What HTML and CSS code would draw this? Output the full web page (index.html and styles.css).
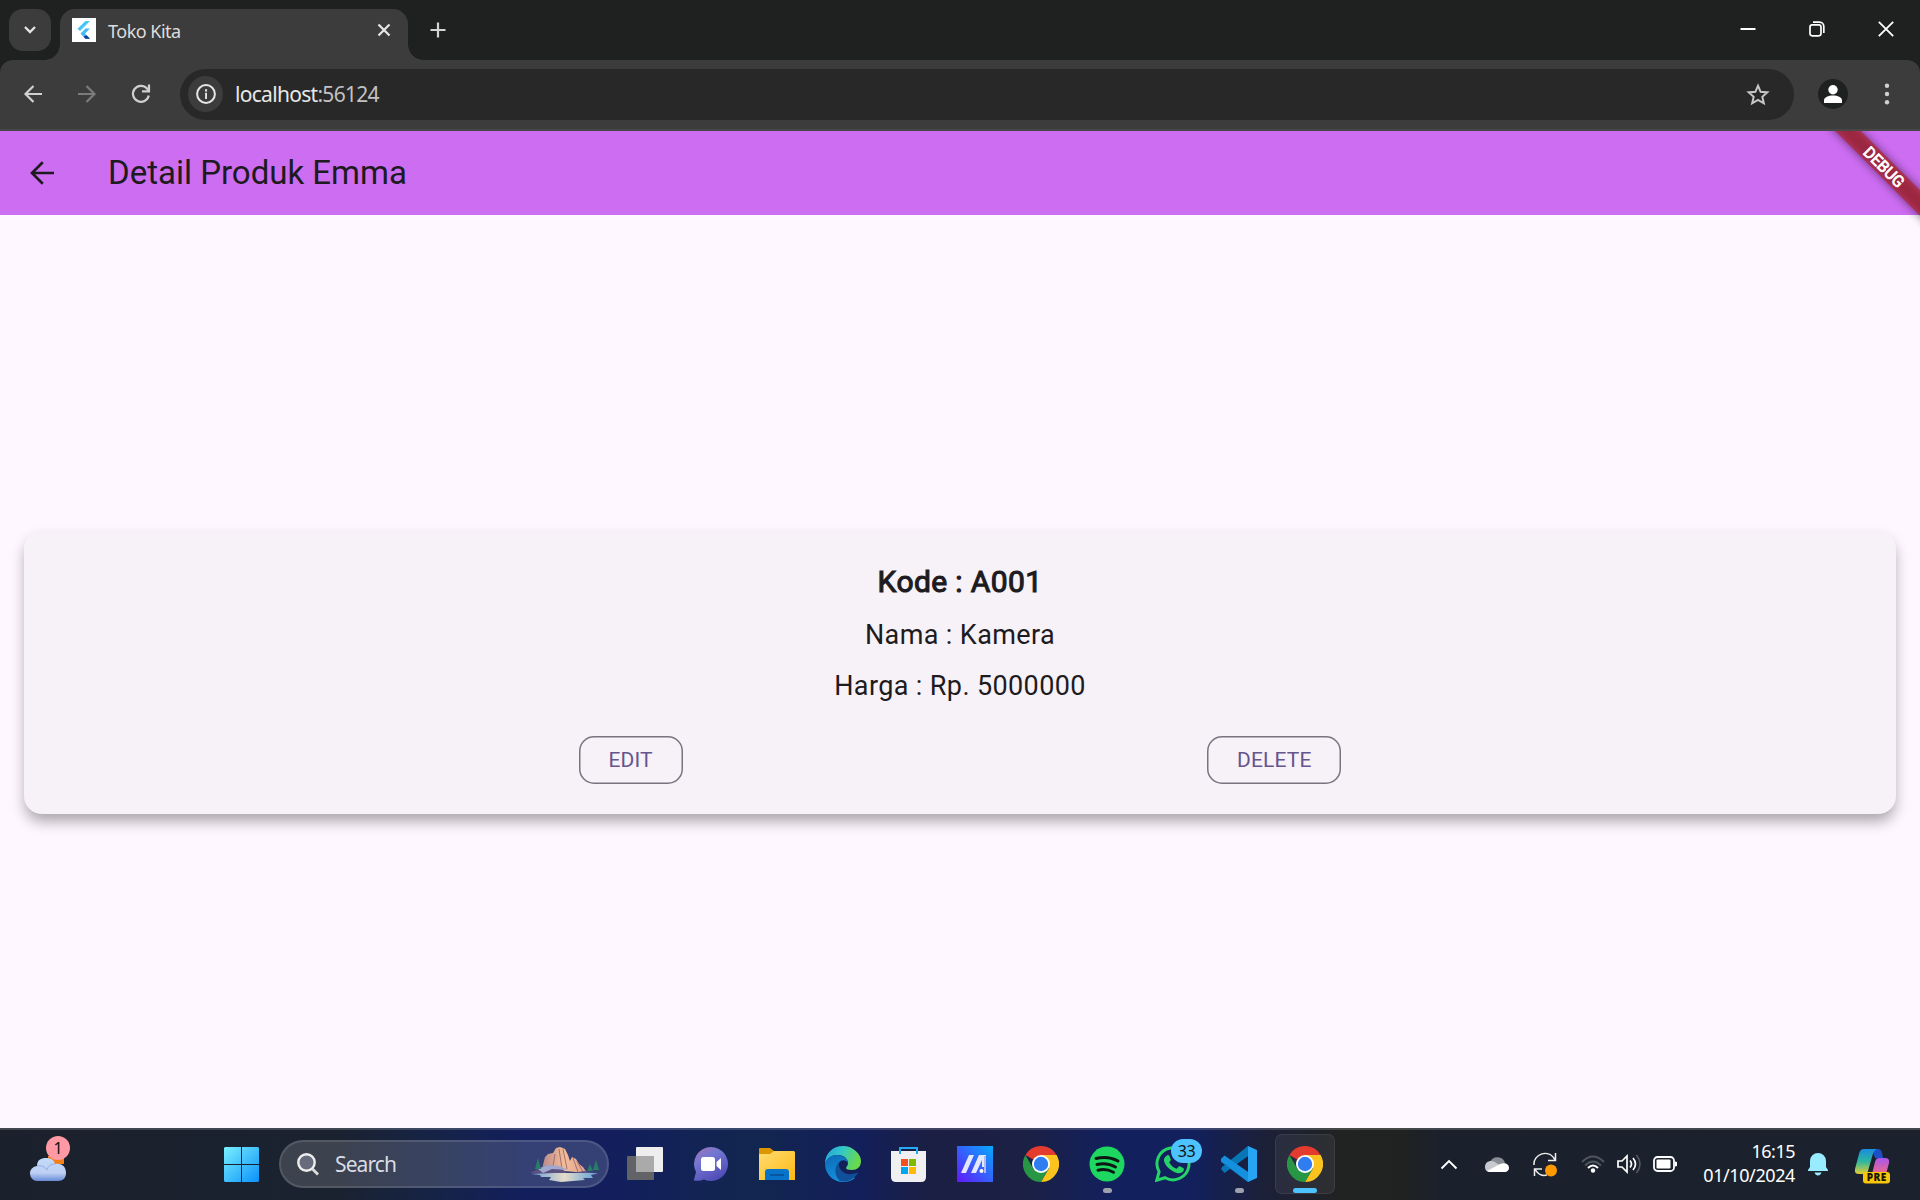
FILE: index.html
```html
<!DOCTYPE html>
<html lang="id">
<head>
<meta charset="utf-8">
<title>Toko Kita</title>
<link rel="stylesheet" href="styles.css">
</head>
<body>
<svg class="defs" width="0" height="0" aria-hidden="true">
  <defs>
    <symbol id="chrome" viewBox="0 0 36 36">
      <path d="M18 18 2.400 9A18 18 0 0 1 33.600 9Z" fill="#e33b2e"/>
      <path d="M18 9H33.600A18 18 0 0 1 18 36L25.800 22.500Z" fill="#fcc31e"/>
      <path d="M10.200 22.500 2.400 9A18 18 0 0 0 18 36L25.800 22.500Z" fill="#279746"/>
      <circle cx="18" cy="18" r="9" fill="#fff"/>
      <circle cx="18" cy="18" r="7.200" fill="#2f7df0"/>
    </symbol>
  </defs>
</svg>

<header class="tabstrip">
  <button class="tab-search"><svg width="14" height="10" viewBox="0 0 14 10"><path d="M2 2l5 5 5-5" fill="none" stroke="#e3e3e3" stroke-width="2.400"/></svg></button>
  <div class="tab">
    <svg class="favicon" width="24" height="24" viewBox="0 0 24 24"><path fill="#fff" d="M0 0h24v24H0z"/><path d="M13.500 3H18L8 13l-2.500-2.300z" fill="#45c5f8"/><path d="M13.500 10.500H18l-5 5 5 5.300h-4.500L8.500 15.500z" fill="#45b8f5"/><path d="M13.500 20.800H18l-3.500-3.500-3 1.400z" fill="#0b3c91"/></svg>
    <span class="tab-title">Toko Kita</span>
    <svg width="14" height="14" viewBox="0 0 14 14"><path d="M1.500 1.500l11 11m0-11l-11 11" stroke="#e8e8e8" stroke-width="2.200"/></svg>
  </div>
  <svg class="newtab" width="16" height="16" viewBox="0 0 16 16"><path d="M8 .5v15M.5 8h15" stroke="#d4d4d4" stroke-width="2.200"/></svg>
  <div class="window-buttons">
    <svg width="16" height="16" viewBox="0 0 16 16"><path d="M.5 8h15" stroke="#fff" stroke-width="2"/></svg>
    <svg width="16" height="16" viewBox="0 0 16 16" fill="none" stroke="#fff" stroke-width="1.700"><rect x="1" y="3.800" width="11" height="11" rx="2.200"/><path d="M4 1.200h6.500A4.300 4.300 0 0 1 14.800 5.500V12"/></svg>
    <svg width="16" height="16" viewBox="0 0 16 16"><path d="M.8.8l14.400 14.400m0-14.400L.8 15.200" stroke="#fff" stroke-width="1.800"/></svg>
  </div>
</header>

<nav class="toolbar">
  <svg width="20" height="20" viewBox="0 0 20 20" fill="none" stroke="#d0d0d0" stroke-width="2.200"><path d="M19 10H3M10.500 2l-8 8 8 8"/></svg>
  <svg width="20" height="20" viewBox="0 0 20 20" fill="none" stroke="#7b7b7b" stroke-width="2.200"><path d="M1 10h16M9.500 2l8 8-8 8"/></svg>
  <svg width="20" height="20" viewBox="0 0 20 20" fill="none" stroke="#d0d0d0" stroke-width="2.200"><path d="M17.800 11.500A8 8 0 1 1 16 4.500l2 2.200M18 .5v6.800h-7"/></svg>
  <div class="omnibox">
    <span class="site-info"><svg width="20" height="20" viewBox="0 0 20 20"><circle cx="10" cy="10" r="8.900" fill="none" stroke="#e6e6e6" stroke-width="2"/><path d="M9.100 8.800h1.900V15H9.100zM9 5.200h2.100v2.200H9z" fill="#e6e6e6"/></svg></span>
    <span class="url">localhost<span class="port">:56124</span></span>
    <svg width="24" height="23" viewBox="0 0 24 23"><path d="M12 2.700l2.600 6.100 6.700.6-5 4.400 1.500 6.500L12 16.900l-5.800 3.400 1.500-6.500-5-4.400 6.700-.6z" fill="none" stroke="#c7c7c7" stroke-width="2"/></svg>
  </div>
  <svg class="avatar" width="30" height="30" viewBox="0 0 30 30"><circle cx="15" cy="15" r="15" fill="#1f2120"/><circle cx="15" cy="10.700" r="4.700" fill="#fff"/><path d="M6 24v-2.500c0-3.500 4.500-5 9-5s9 1.500 9 5V24z" fill="#fff"/></svg>
  <svg class="menu" width="6" height="22" viewBox="0 0 6 22" fill="#d0d0d0"><circle cx="3" cy="2.800" r="2.200"/><circle cx="3" cy="11" r="2.200"/><circle cx="3" cy="19.200" r="2.200"/></svg>
</nav>

<main class="app">
  <div class="appbar">
    <svg width="24" height="24" viewBox="0 0 24 24"><path d="M24 12H2.500M12.800 1.200L2 12l10.800 10.800" fill="none" stroke="#1d1b20" stroke-width="2.700"/></svg>
    <h1>Detail Produk Emma</h1>
  </div>
  <svg class="debug" width="110" height="110" viewBox="0 0 110 110">
    <defs><filter id="soft" x="-30%" y="-100%" width="160%" height="300%"><feGaussianBlur stdDeviation="5"/></filter></defs>
    <g transform="translate(74 36) rotate(45)">
      <rect x="-90" y="-9" width="180" height="18" fill="#000" opacity=".5" filter="url(#soft)"/>
      <rect x="-90" y="-9" width="180" height="18" fill="#b71c1c" opacity=".63"/>
      <text x="0" y="5.500" text-anchor="middle" class="debug-text">DEBUG</text>
    </g>
  </svg>
  <div class="content">
    <section class="card">
      <p class="code">Kode : A001</p>
      <p class="line">Nama : Kamera</p>
      <p class="line">Harga : Rp. 5000000</p>
      <div class="actions"><button class="edit">EDIT</button><button class="delete">DELETE</button></div>
    </section>
  </div>
</main>

<footer class="taskbar">
  <div class="weather">
    <svg width="36" height="26" viewBox="0 0 36 26"><defs><linearGradient id="cl" x2="0" y2="1"><stop stop-color="#c3dafa"/><stop offset=".65" stop-color="#bdd0f3"/><stop offset="1" stop-color="#688bd6"/></linearGradient></defs><path d="M18 0h16v8H18z" fill="#f4801c"/><path d="M8 25a7.500 7.500 0 0 1-1-15C7 4 11 2 16 2c5 0 8 2 9 6 6-1 11 2 11 9 0 5-3 8-8 8z" fill="url(#cl)"/><path d="M7 10c5-1 8 1 10 4 1-4 4-6 8-6" stroke="#91afe4" fill="none"/></svg>
    <span class="badge red">1</span>
  </div>
  <div class="start"><svg width="35" height="35" viewBox="0 0 35 35"><defs><linearGradient id="win" x2="1" y2="1"><stop stop-color="#79f0ff"/><stop offset="1" stop-color="#0a91f8"/></linearGradient></defs><path fill="url(#win)" d="M1 0h16v17H0V1zM18 0h16l1 1v16H18zM0 18h17v17H1l-1-1zM18 18h17v16l-1 1H18z"/></svg></div>
  <div class="search">
    <svg width="22" height="23" viewBox="0 0 22 23"><circle cx="9.500" cy="9.500" r="8.200" fill="#666c7b" stroke="#eee" stroke-width="2.400"/><path d="M15.500 16l5.500 5.500" stroke="#ddd" stroke-width="2.800"/></svg>
    <span class="search-label">Search</span>
    <svg width="72" height="36" viewBox="0 0 72 36">
      <defs><linearGradient id="rock" x2="1"><stop stop-color="#b98a8a"/><stop offset=".5" stop-color="#f4bd98"/><stop offset="1" stop-color="#dba08c"/></linearGradient><linearGradient id="lake" x2="1"><stop stop-color="#6aa0d6"/><stop offset=".5" stop-color="#e4dccb"/><stop offset="1" stop-color="#5b9fd9"/></linearGradient></defs>
      <path d="M13 23l3-12 3-3 5-1 3-5 4-1 5 2 3 6 2 6 2-4 4 2 3 5 4 3 4 6z" fill="url(#rock)"/>
      <path d="M30 3l3 20M34 3l4 20M26 8l-2 12M44 12l5 14M48 15l6 11" stroke="#a3706f" stroke-width="1" fill="none"/>
      <path d="M1 27l8-4 9-4 14 3 7 6 16-3 15 3-20 2-30-1z" fill="#5a5280"/>
      <path d="M18 19l13 1 8 4-16-1-9 4-5-4z" fill="#a2a8ce"/>
      <path d="M2 28l24-1 43 0-7 2 2 3H54l2 2-24 2-12-2 2-3H12l-1-2z" fill="url(#lake)"/>
      <path d="M9 12l-3 11h6zM61 18l-3 7h6zM67 14l-3 10h6z" fill="#287d68"/>
    </svg>
  </div>
  <div class="task"><svg width="36" height="36" viewBox="0 0 36 36"><rect y="10" width="27" height="24" rx="1" fill="#626366"/><rect x="9" y="1" width="27" height="25" rx="1" fill="#eee"/><path d="M9 10h18v16H9z" fill="#aaa"/></svg></div>
  <div class="task"><svg width="36" height="36" viewBox="0 0 36 36"><defs><linearGradient id="ch" x2=".6" y2="1"><stop stop-color="#a675b3"/><stop offset=".4" stop-color="#7377d2"/><stop offset="1" stop-color="#514cb8"/></linearGradient></defs><path d="M18 1a17 17 0 1 1-7 32.500C8 35 4 35 .8 34.500L3 26A17 17 0 0 1 18 1z" fill="url(#ch)"/><rect x="8" y="11" width="14" height="14" rx="2.500" fill="#fff"/><path d="M23.500 16l4.500-4v12l-4.500-4z" fill="#fff"/></svg></div>
  <div class="task"><svg width="36" height="36" viewBox="0 0 36 36"><defs><linearGradient id="fo" x2="1" y2="1"><stop stop-color="#ffdc72"/><stop offset="1" stop-color="#fdb913"/></linearGradient></defs><path d="M0 3q0-1 1-1h10l4 3v4H0z" fill="#dc9600"/><path d="M0 8h11l4-3h20l1 1v28H0z" fill="url(#fo)"/><path d="M6 34v-8q0-3 3-3h18q3 0 3 3v8z" fill="#0874c9"/><path d="M11 29h14" stroke="#07559c" stroke-width="2"/></svg></div>
  <div class="task"><svg width="36" height="36" viewBox="0 0 36 36"><defs><linearGradient id="ed" x2="1" y2=".3"><stop stop-color="#279dde"/><stop offset=".5" stop-color="#33c9c7"/><stop offset="1" stop-color="#68d94c"/></linearGradient><linearGradient id="ed2" x2=".4" y2="1"><stop stop-color="#0c6ab8"/><stop offset="1" stop-color="#1492dc"/></linearGradient></defs><path d="M0 18C0 7 8 0 18 0s18 8 18 15c0 6-4 9-9 9-4 0-6-1-6-2 0-1 2-2 2-5 0-4-4-8-10-8S2 12 0 18z" fill="url(#ed)"/><path d="M0 18C2 12 6 9 12 9c6 0 11 4 11 8-1-3-7-4-9 0-3 8 4 15 13 13l3 2c-4 3-8 4-12 4C8 36 0 28 0 18z" fill="url(#ed2)"/><path d="M14 16c-5 5-5 14 1 19 8 2 15-3 18-8-1-1-5 2-10 1-6-1-10-6-9-12z" fill="#10509a"/></svg></div>
  <div class="task"><svg width="36" height="36" viewBox="0 0 36 36"><path d="M0 5h35v26q0 5-5 5H5q-5 0-5-5z" fill="#f0f0f2"/><path d="M9 8V2h17v6" fill="none" stroke="#25abef" stroke-width="2"/><path d="M10 13h7v7h-7z" fill="#f25022"/><path d="M18 13h7v7h-7z" fill="#7fba00"/><path d="M10 21h7v7h-7z" fill="#00a4ef"/><path d="M18 21h7v7h-7z" fill="#ffb900"/></svg></div>
  <div class="task"><svg width="36" height="36" viewBox="0 0 36 36"><defs><linearGradient id="as" x1="0" y1="1" x2="1" y2="0"><stop stop-color="#6318fa"/><stop offset="1" stop-color="#05aaff"/></linearGradient></defs><path d="M0 0h36v36H0z" fill="url(#as)"/><path d="M4 27L12 9h5L9 27zM14 27l8-18h7v12h-4v-7l-6 13z" fill="#e4e8ff"/><path d="M28 10v17" stroke="#b3b9f5" stroke-width="2"/><circle cx="24.500" cy="25" r="2" fill="#fff"/></svg></div>
  <div class="task"><svg width="36" height="36"><use href="#chrome"/></svg></div>
  <div class="task running"><svg width="36" height="36" viewBox="0 0 36 36"><circle cx="18" cy="18" r="17.500" fill="#1ed760"/><path d="M7 12.500q12-3 22 2.500M8 18.500q10-2.500 18.500 2.500M9 24.200q8-2 15.500 2" fill="none" stroke="#0c1714" stroke-width="3" stroke-linecap="round"/></svg></div>
  <div class="task"><svg width="36" height="36" viewBox="0 0 36 36"><path d="M1.800 34.200l2.300-8.500a16 16 0 1 1 6 6z" fill="none" stroke="#25d366" stroke-width="3"/><path d="M12 9.500c1-.7 2-.4 2.500.7l1.200 3c.3 1-.2 1.600-1.500 3 2 3.500 4 5.300 7.500 6.600l2-2.300c.5-.5 1-.4 1.600 0l2.900 1.500c1 .5.800 1.500.4 2.500-1 2.500-4 3.300-6.600 2.500C16 25 10.500 20.500 9 15c-.5-2.500 1-4.500 3-5.500z" fill="#25d366"/></svg><span class="badge blue">33</span></div>
  <div class="task running"><svg width="36" height="36" viewBox="0 0 36 36"><path d="M27 0L9.500 16 3.500 11 0 12.500V16l27 20V26L14 18 27 10z" fill="#0075b8"/><path d="M0 23l3.500 4L27 10V0L1 21z" fill="#0876b6"/><path d="M0 13l3.500-3.500L27 26v10L0 15z" fill="#1490df"/><path d="M27 0l9 4v28l-9 4z" fill="#27a5f2"/></svg></div>
  <div class="task active"><svg width="36" height="36"><use href="#chrome"/></svg></div>
  <div class="tray">
    <svg class="chev" width="18" height="11" viewBox="0 0 18 11"><path d="M1.500 9.500L9 2l7.500 7.500" fill="none" stroke="#fff" stroke-width="1.900"/></svg>
    <svg class="drive" width="24" height="17" viewBox="0 0 24 17"><path d="M5 6a8 8 0 0 1 15 1l-8 6z" fill="#898d95"/><path d="M0 11c0-4 3-6 6-6 4 0 7 3 14 9l-3 2H5c-3 0-5-2-5-5z" fill="#c7c9ce"/><path d="M2 15l13-7c5-2 9 0 9 4 0 2-2 4-4 4H5z" fill="#fff"/></svg>
    <svg class="sync" width="24" height="25" viewBox="0 0 24 25"><path d="M1 13C0 2 16-4 22 8M22.500 1v7.500H15M1.500 24v-7H9M2 17c3 6 8 7 12 6" fill="none" stroke="#eee" stroke-width="1.500"/><circle cx="18" cy="18.500" r="6" fill="#ff9900"/></svg>
    <svg class="wifi" width="24" height="18" viewBox="0 0 24 18" fill="none" stroke-width="1.800"><path d="M1 7Q12-4 23 7" stroke="#505660"/><path d="M4 10.500q8-8 16 0" stroke="#505660"/><path d="M7 13q5-5 10 0" stroke="#fff" stroke-width="2"/><circle cx="12" cy="15.500" r="2.200" fill="#fff"/></svg>
    <svg class="vol" width="24" height="20" viewBox="0 0 24 20" fill="none" stroke="#fff" stroke-width="1.700"><path d="M1 7v6h4l5 5V2L5 7z"/><path d="M13 6.500q3 3.500 0 7M16 4q5 6 0 12"/><path d="M19.500 1q7 9 0 18" stroke="#505660"/></svg>
    <svg width="24" height="16" viewBox="0 0 24 16"><rect x="1" y="1" width="20" height="14" rx="3.500" fill="none" stroke="#fff" stroke-width="1.800"/><rect x="3.500" y="3.500" width="14" height="9" rx="1" fill="#fff"/><path d="M22 5.500l2 .5v4l-2 .5z" fill="#fff"/></svg>
    <div class="clock"><span class="time">16:15</span><span class="date">01/10/2024</span></div>
    <svg class="bell" width="20" height="24" viewBox="0 0 20 24"><path d="M2 9a8 8 0 0 1 16 0v6l2 3v1H0v-1l2-3zM6.500 20.500h7q-1 3-3.500 3t-3.500-3z" fill="#99ebff"/></svg>
    <svg class="copilot" width="36" height="35" viewBox="0 0 36 35"><defs><linearGradient id="ca" x2="0" y2="1"><stop stop-color="#188ee0"/><stop offset=".5" stop-color="#2eb6a0"/><stop offset="1" stop-color="#e4cf31"/></linearGradient><linearGradient id="cb" x2="0" y2="1"><stop stop-color="#a857ee"/><stop offset="1" stop-color="#f06a85"/></linearGradient></defs><path d="M17 0h6q3 0 4 4l1 5h-8z" fill="#1b50c7"/><path d="M9 0h13c-3 1-4 4-5 8l-4 14q-1 3-4 3H4q-5 0-4-5L4 5Q5 0 9 0z" fill="url(#ca)"/><path d="M24 9h6q5 0 4 5l-3 11H17l3-12q1-4 4-4z" fill="url(#cb)"/><rect x="8" y="23" width="27" height="11.500" rx="3" fill="#f8c50a"/><text x="21.800" y="32.200" text-anchor="middle" class="pre">PRE</text></svg>
  </div>
</footer>
</body>
</html>
```
FILE: styles.css
```css
* { box-sizing: border-box; }
body {
  margin: 0;
  width: 1920px;
  height: 1200px;
  display: flex;
  flex-direction: column;
  overflow: hidden;
  background: #1f2120;
  font-family: "Noto Sans", sans-serif;
}
svg { display: block; flex: none; }
.defs { position: absolute; }
button { font: inherit; background: none; border: 0; padding: 0; }

/* Browser window */
.tabstrip { height: 60px; flex: none; display: flex; padding: 9px 0 0 9px; background: #1f2120; }
.tab-search { width: 42px; height: 42px; border-radius: 14px; background: #3c3c3c; display: grid; place-items: center; }
.tab {
  position: relative;
  width: 348px;
  margin-left: 9px;
  border-radius: 15px 15px 0 0;
  background: #3c3c3c;
  display: flex;
  align-items: center;
  padding: 0 17px 9px 12px;
}
.tab::before, .tab::after {
  content: "";
  position: absolute;
  bottom: 0;
  width: 15px;
  height: 15px;
}
.tab::before { left: -15px; background: radial-gradient(circle at 0 0, transparent 14.5px, #3c3c3c 15px); }
.tab::after { right: -15px; background: radial-gradient(circle at 100% 0, transparent 14.5px, #3c3c3c 15px); }
.tab-title { flex: 1; margin-left: 12px; font-size: 18px; line-height: 24px; letter-spacing: -.5px; color: #dedede; padding-top: 1px; }
.newtab { margin: 13px 0 0 22px; }
.window-buttons { margin: 12px 26px 0 auto; display: flex; gap: 53px; }

.toolbar {
  height: 71px;
  flex: none;
  display: flex;
  align-items: center;
  padding: 0 30px 1px 23px;
  background: #3c3c3c;
  border-bottom: 2px solid #474747;
  border-radius: 13px 13px 0 0;
}
.toolbar > svg + svg { margin-left: 34px; }
.omnibox {
  flex: 1;
  height: 51px;
  margin: 0 24px 0 29px;
  padding: 0 24px 0 8px;
  border-radius: 26px;
  background: #282828;
  display: flex;
  align-items: center;
}
.site-info { width: 35px; height: 36px; border-radius: 50%; background: #3c3c3c; display: grid; place-items: center; }
.url { flex: 1; margin-left: 12px; font-size: 21px; letter-spacing: -.7px; color: #e8e8e8; }
.port { color: #c2c2c2; }
.toolbar > .menu { margin-left: 36px; }

/* Flutter app */
.app {
  position: relative;
  flex: 1;
  display: flex;
  flex-direction: column;
  background: #fef7ff;
  color: #1d1b20;
  font-family: Roboto, sans-serif;
}
.appbar { height: 84px; display: flex; align-items: center; gap: 54px; padding-left: 30px; background: #cd6df2; }
.appbar h1 { margin: 0; font-size: 33px; font-weight: 400; line-height: 42px; }
.debug { position: absolute; top: 0; right: 0; overflow: hidden; }
.debug-text { font: 400 15.8px Roboto, sans-serif; fill: #fff; stroke: #fff; stroke-width: .8px; }
.content { flex: 1; display: flex; align-items: center; padding: 0 24px; }
.card {
  flex: 1;
  padding: 30px;
  display: flex;
  flex-direction: column;
  align-items: center;
  border-radius: 18px;
  background: #f7f1f8;
  box-shadow: 0 9px 14px -3px rgba(0,0,0,.25), 0 8px 16px rgba(0,0,0,.13);
}
.card p { margin: 0; letter-spacing: .375px; }
.card .code { font-size: 30px; font-weight: 400; line-height: 44px; -webkit-text-stroke: 1.1px #1d1b20; }
.card .line { margin-top: 12px; font-size: 27px; line-height: 39px; }
.actions { align-self: stretch; margin-top: 30px; display: flex; justify-content: space-evenly; }
.actions button {
  height: 48px;
  border: 0;
  box-shadow: inset 0 0 0 1.5px #79747e;
  border-radius: 15px;
  color: #65558f;
  font-size: 21px;
  letter-spacing: .15px;
}
.edit { width: 104px; }
.delete { width: 134px; }

/* Taskbar */
.taskbar {
  height: 72px;
  flex: none;
  display: flex;
  align-items: center;
  padding-bottom: 2px;
  border-top: 2px solid rgba(255,255,255,.17);
  background: linear-gradient(90deg, #1b212c 0, #1a2230 340px, #162348 440px, #121f5c 520px, #121f5c 620px, #12264f 750px, #131f5a 860px, #1b1f43 930px, #1b2045 1030px, #12205e 1110px, #12205e 1190px, #1b203a 1260px, #212222 1340px, #202121 1400px, #1b212c 1440px, #1c222d 1920px) border-box;
  color: #fff;
}
.weather { position: relative; margin: 10px 0 0 30px; }
.badge { position: absolute; color: #111; display: grid; place-items: center; font-size: 16px; line-height: 24px; height: 24px; }
.red { left: 16px; top: -20px; width: 24px; border-radius: 50%; background: #ff99a4; }
.blue { left: 19px; top: -8px; width: 31px; border-radius: 12px; background: #4cc2ff; letter-spacing: -.3px; }
.start { margin: 0 20px 0 158px; }
.search {
  width: 330px;
  height: 48px;
  margin: 0 3px 0 0;
  border: 2px solid rgba(255,255,255,.12);
  border-radius: 24px;
  background: rgba(255,255,255,.15);
  display: flex;
  align-items: center;
  padding: 0 6px 0 16px;
}
.search-label { flex: 1; margin-left: 16px; font-size: 21px; line-height: 28px; letter-spacing: -.9px; color: #dadde5; }
.task { position: relative; width: 60px; height: 60px; margin: 0 3px; display: grid; place-items: center; border-radius: 7px; }
.task > svg { grid-area: 1 / 1; }
.task .blue { left: 28px; top: 5px; }
.running::after, .active::after {
  content: "";
  position: absolute;
  bottom: 1px;
  left: 26px;
  width: 9px;
  height: 5px;
  border-radius: 3px;
  background: #9da0ad;
}
.active { background: rgba(255,255,255,.06); border: 1px solid rgba(255,255,255,.07); }
.active::after { left: 17px; bottom: 0; width: 24px; background: #4cc2ff; }
.tray { flex: 1; display: flex; align-items: center; padding: 0 29px 0 0; margin-left: 102px; }
.chev { margin-right: 27px; }
.drive { margin-right: 24px; }
.sync { margin-right: 24px; }
.wifi { margin-right: 12px; }
.vol { margin-right: 12px; }
.clock { flex: 1; display: flex; flex-direction: column; text-align: right; font-size: 18px; line-height: 24px; margin-top: -2px; }
.time { letter-spacing: -.5px; }
.date { letter-spacing: -.4px; }
.bell { margin: 0 27px 0 13px; }
.copilot { margin-top: 4px; }
.pre { font: 800 10px "Open Sans", sans-serif; fill: #1a1500; letter-spacing: .5px; }
```
